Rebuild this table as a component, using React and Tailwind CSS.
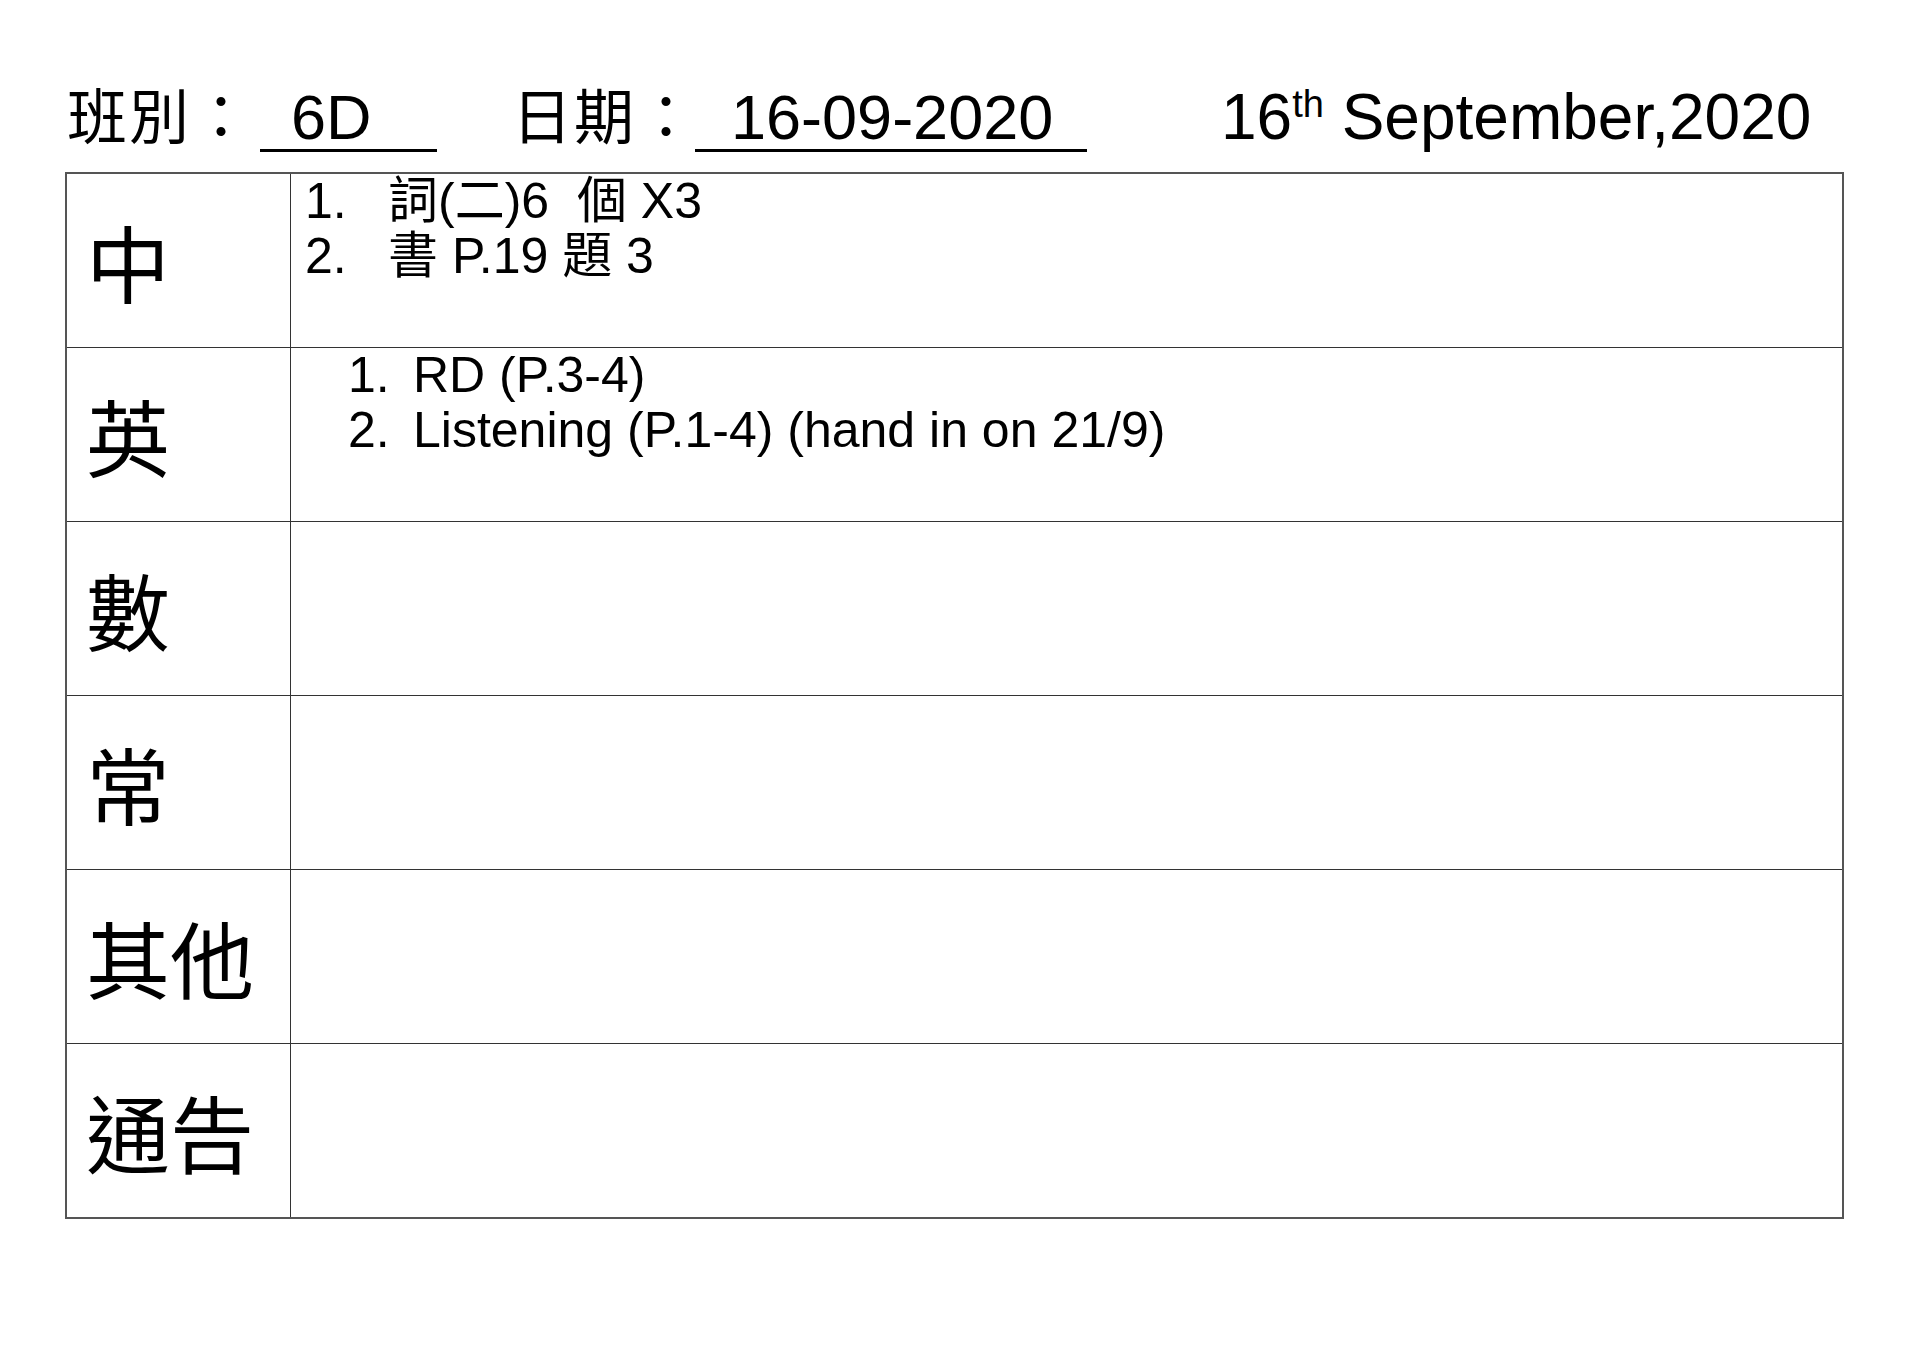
const latin = { fontFamily: '"Liberation Sans", "Noto Sans CJK TC", sans-serif' };
const cjk = { fontFamily: '"Noto Sans CJK TC", "Noto Sans CJK SC", sans-serif' };

const rows = [
  {
    label: '中',
    pad: 'pl-[14px]',
    num: 'w-[83px]',
    items: [
      <>詞(二)6{'\u00a0\u00a0'}個 X3</>,
      <>書 P.19 題 3</>,
    ],
  },
  {
    label: '英',
    pad: 'pl-[57px]',
    num: 'w-[65px]',
    items: [<>RD (P.3-4)</>, <>Listening (P.1-4) (hand in on 21/9)</>],
  },
  { label: '數', items: [] },
  { label: '常', items: [] },
  { label: '其他', items: [] },
  { label: '通告', items: [] },
];

const App = () => {
  return (
    <div className="w-full h-[1357px] bg-white text-black">
      {/* header line */}
      <div className="h-[172px] pt-[83px] pl-[67px] flex items-baseline whitespace-nowrap">
        <span className="w-[193px] shrink-0 text-[60px] leading-none tracking-[2px]" style={cjk}>
          班別：
        </span>
        <span
          className="inline-block shrink-0 w-[177px] pl-[31px] text-[63px] leading-none border-b-[3px] border-black"
          style={latin}
        >
          6D
        </span>
        <span className="ml-[75px] shrink-0 w-[183px] text-[60px] leading-none tracking-[2px]" style={cjk}>
          日期：
        </span>
        <span
          className="inline-block shrink-0 w-[392px] pl-[36px] text-[63px] leading-none border-b-[3px] border-black"
          style={latin}
        >
          16-09-2020
        </span>
        <span className="ml-[134px] shrink-0 text-[64px] leading-none" style={latin}>
          16<span className="text-[38px] align-top leading-none">th</span> September,2020
        </span>
      </div>

      {/* homework table */}
      <div className="ml-[65px] w-[1779px] border-2 border-[#555]">
        {rows.map((row, i) => (
          <div
            key={row.label}
            className={`flex ${i > 0 ? 'h-[174px] border-t border-[#333]' : 'h-[173px]'}`}
          >
            <div
              className="w-[224px] shrink-0 flex items-center pl-[19px] text-[84px] leading-none border-r border-[#333]"
              style={cjk}
            >
              {row.label}
            </div>
            <div className={`flex-1 text-[50px] leading-[55px] ${row.pad || ''}`} style={latin}>
              {row.items.map((item, j) => (
                <div key={j} className="flex">
                  <span className={`${row.num} shrink-0`}>{j + 1}.</span>
                  <span>{item}</span>
                </div>
              ))}
            </div>
          </div>
        ))}
      </div>
    </div>
  );
};

export default App;
